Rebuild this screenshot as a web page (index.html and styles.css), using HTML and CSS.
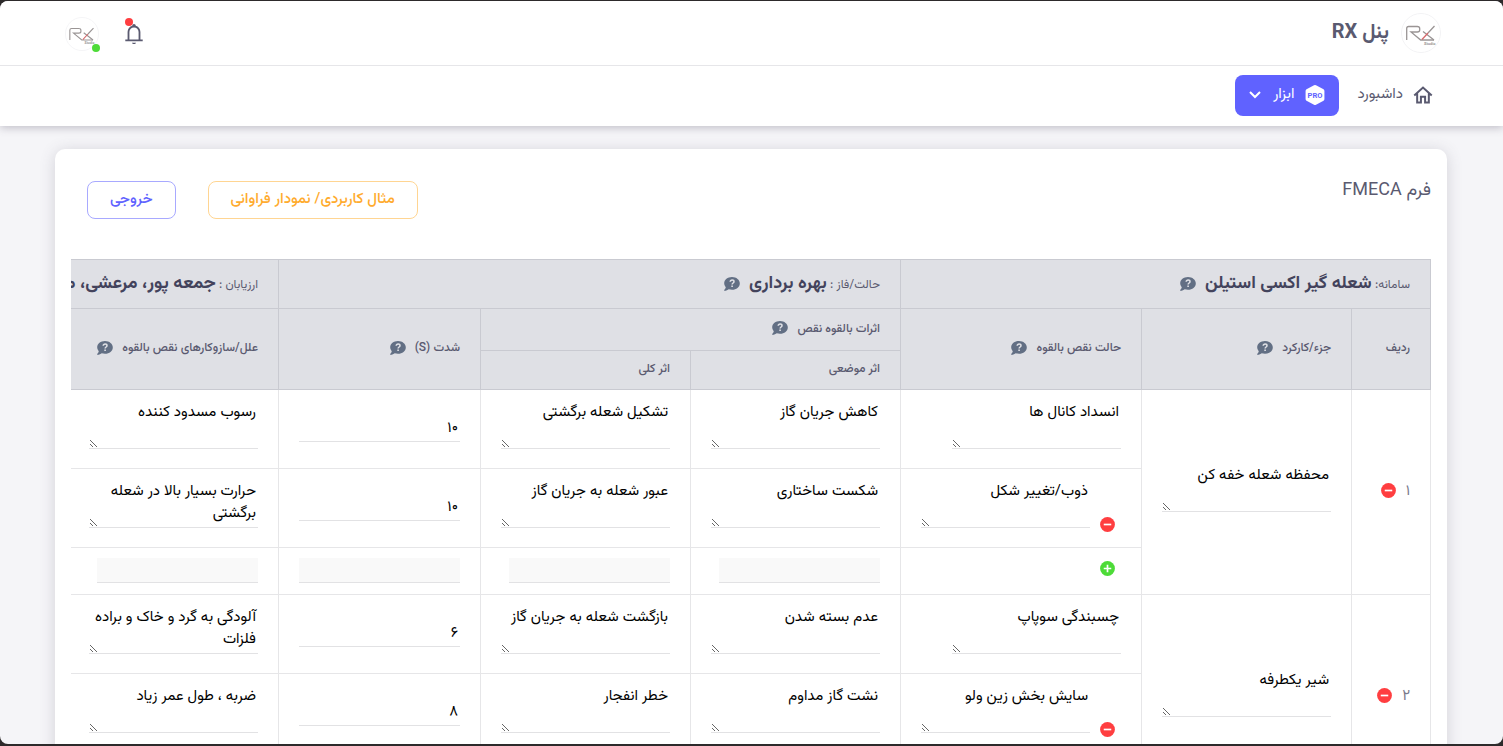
FILE: index.html
```html
<!DOCTYPE html>
<html lang="fa" dir="rtl">
<head>
<meta charset="utf-8">
<meta name="viewport" content="width=device-width, initial-scale=1">
<title>پنل RX</title>
<link rel="stylesheet" href="styles.css">
</head>
<body>
<svg class="sprite" aria-hidden="true">
  <symbol id="help" viewBox="0 0 16 14">
    <path fill="currentColor" d="M8 0C3.600 0 .2 2.800.2 6.300c0 1.500.6 2.800 1.600 3.900C1.500 11.400.800 12.400.1 13.100c-.2.300 0 .7.300.7 1.900 0 3.400-.8 4.300-1.600 1 .3 2.100.5 3.300.5 4.400 0 7.800-2.800 7.800-6.300S12.400 0 8 0z"/>
    <path fill="none" stroke="#dfe0e5" stroke-width="1.500" d="M6.200 4.800c0-1 .8-1.700 1.900-1.700s1.900.6 1.900 1.600c0 1.300-1.900 1.300-1.900 2.800"/>
    <path fill="#dfe0e5" d="M7.300 8.500h1.600v1.600H7.300z"/>
  </symbol>
  <symbol id="minus" viewBox="0 0 16 16">
    <circle cx="8" cy="8" r="7.900" fill="#ff3e40"/><path d="M4 8h8" stroke="#fff" stroke-width="1.800"/>
  </symbol>
  <symbol id="plus" viewBox="0 0 16 16">
    <circle cx="8" cy="8" r="7.900" fill="#4ddb38"/><path d="M4 8h8M8 4v8" stroke="#fff" stroke-width="1.800"/>
  </symbol>
  <symbol id="rx" viewBox="0 0 40 40">
    <circle cx="20" cy="20" r="19.500" fill="#fff" stroke="#f3f3f5"/>
    <path fill="none" stroke="#9a9595" stroke-width="1.300" d="M5.700 27V15.500q0-2 2-2h8.500q2.500 0 2.500 2v1.500q0 2-2.500 2H10l9.700 8H33"/>
    <path fill="none" stroke="#9a9595" stroke-width="1.300" d="M22 18.500l11 8.500M33.500 13L27 20"/>
    <path fill="none" stroke="#d5686b" stroke-width="1.300" d="M27 20l-6 6.500"/>
    <text x="23" y="31.500" font-size="4" font-weight="700" fill="#9a9595" direction="ltr">Studio</text>
  </symbol>
</svg>
<div class="window">
  <header class="header">
    <div class="topbar">
      <div class="container topbar-row">
        <a class="brand" href="#"><svg class="brand-logo" aria-hidden="true"><use href="#rx"/></svg><span>پنل RX</span></a>
        <div class="user-tools">
          <button class="bell" type="button" aria-label="اعلان‌ها">
            <svg viewBox="0 0 24 24" aria-hidden="true"><path fill="currentColor" d="M19 13.600V9.800c0-3.200-2.200-6-5.100-6.700V2.900C13.900 1.800 13.100 1 12 1s-1.900.8-1.900 1.900v.2C7.200 3.800 5 6.600 5 9.800V18H2.500v2h19v-2H19zM7 18V9.800C7 7.100 9.200 4.900 12 4.900s5 2.200 5 4.900V18zM9.700 21.500h4.600c-.3.900-1.200 1.500-2.300 1.500s-2-.6-2.300-1.500z"/></svg>
            <span class="dot dot-red"></span>
          </button>
          <a class="avatar" href="#" aria-label="حساب کاربری"><svg aria-hidden="true"><use href="#rx"/></svg><span class="dot dot-green"></span></a>
        </div>
      </div>
    </div>
    <nav class="menu">
      <div class="container menu-row">
        <a class="menu-link" href="#">
          <svg viewBox="0 0 24 24" aria-hidden="true"><path fill="none" stroke="currentColor" stroke-width="2.400" d="M1.500 12.500L12 3l10.500 9.500M5 10v11h4.500v-7h5v7H19V10"/></svg>
          <span>داشبورد</span>
        </a>
        <button class="menu-link active" type="button">
          <svg viewBox="0 0 24 24" aria-hidden="true"><path fill="#fff" d="M10.800.4q1.200-.6 2.400 0l9 4.800q1.100.7 1.100 2v9.600q0 1.300-1.100 2l-9 4.800q-1.200.6-2.400 0l-9-4.800q-1.100-.7-1.100-2V7.200q0-1.300 1.100-2z"/><text class="pro" x="12" y="15.500" text-anchor="middle" direction="ltr">PRO</text></svg>
          <span>ابزار</span>
          <svg class="chevron" viewBox="0 0 12 8" aria-hidden="true"><path fill="none" stroke="#fff" stroke-width="2" d="M1 1l5 5 5-5"/></svg>
        </button>
      </div>
    </nav>
  </header>
  <main class="container">
    <section class="card">
      <div class="card-head">
        <h1>فرم FMECA</h1>
        <div class="actions">
          <button class="btn btn-warning" type="button">مثال کاربردی/ نمودار فراوانی</button>
          <button class="btn btn-primary" type="button">خروجی</button>
        </div>
      </div>
      <div class="table-wrap">
        <table class="fmeca">
          <colgroup><col class="c-index"><col class="c-text"><col class="c-mode"><col class="c-text"><col class="c-text"><col class="c-score"><col class="c-text"><col class="c-text"></colgroup>
          <thead>
            <tr class="title-row">
              <th colspan="3">سامانه: <strong>شعله گیر اکسی استیلن</strong><svg class="help"><use href="#help"/></svg></th>
              <th colspan="3">حالت/فاز : <strong>بهره برداری</strong><svg class="help"><use href="#help"/></svg></th>
              <th colspan="2">ارزیابان : <strong>جمعه پور، مرعشی، محمدی</strong></th>
            </tr>
            <tr class="group-row">
              <th rowspan="2">ردیف</th>
              <th rowspan="2">جزء/کارکرد<svg class="help"><use href="#help"/></svg></th>
              <th rowspan="2">حالت نقص بالقوه<svg class="help"><use href="#help"/></svg></th>
              <th colspan="2">اثرات بالقوه نقص<svg class="help"><use href="#help"/></svg></th>
              <th rowspan="2">شدت (S)<svg class="help"><use href="#help"/></svg></th>
              <th rowspan="2">علل/سازوکارهای نقص بالقوه<svg class="help"><use href="#help"/></svg></th>
              <th rowspan="2" aria-label="احتمال وقوع"></th>
            </tr>
            <tr class="sub-row"><th>اثر موضعی</th><th>اثر کلی</th></tr>
          </thead>
          <tbody>
            <tr>
              <td rowspan="3" class="mid"><div class="index">۱<button class="icon-btn" type="button" aria-label="حذف"><svg><use href="#minus"/></svg></button></div></td>
              <td rowspan="3"><textarea aria-label="جزء/کارکرد">محفظه شعله خفه کن</textarea></td>
              <td><textarea aria-label="حالت نقص">انسداد کانال ها</textarea></td>
              <td><textarea aria-label="اثر موضعی">کاهش جریان گاز</textarea></td>
              <td><textarea aria-label="اثر کلی">تشکیل شعله برگشتی</textarea></td>
              <td class="mid"><input type="text" aria-label="شدت" value="۱۰"></td>
              <td><textarea aria-label="علل">رسوب مسدود کننده</textarea></td>
              <td class="mid"><input type="text" aria-label="وقوع"></td>
            </tr>
            <tr>
              <td><div class="removable"><button class="icon-btn" type="button" aria-label="حذف"><svg><use href="#minus"/></svg></button><textarea aria-label="حالت نقص">ذوب/تغییر شکل</textarea></div></td>
              <td><textarea aria-label="اثر موضعی">شکست ساختاری</textarea></td>
              <td><textarea aria-label="اثر کلی">عبور شعله به جریان گاز</textarea></td>
              <td class="mid"><input type="text" aria-label="شدت" value="۱۰"></td>
              <td><textarea aria-label="علل">حرارت بسیار بالا در شعله برگشتی</textarea></td>
              <td class="mid"><input type="text" aria-label="وقوع"></td>
            </tr>
            <tr class="add-row">
              <td><button class="icon-btn" type="button" aria-label="افزودن"><svg><use href="#plus"/></svg></button></td>
              <td><input type="text" aria-label="اثر موضعی" disabled></td>
              <td><input type="text" aria-label="اثر کلی" disabled></td>
              <td><input type="text" aria-label="شدت" disabled></td>
              <td><input type="text" aria-label="علل" disabled></td>
              <td><input type="text" aria-label="وقوع" disabled></td>
            </tr>
          </tbody>
          <tbody>
            <tr>
              <td rowspan="3" class="mid"><div class="index">۲<button class="icon-btn" type="button" aria-label="حذف"><svg><use href="#minus"/></svg></button></div></td>
              <td rowspan="3"><textarea aria-label="جزء/کارکرد">شیر یکطرفه</textarea></td>
              <td><textarea aria-label="حالت نقص">چسبندگی سوپاپ</textarea></td>
              <td><textarea aria-label="اثر موضعی">عدم بسته شدن</textarea></td>
              <td><textarea aria-label="اثر کلی">بازگشت شعله به جریان گاز</textarea></td>
              <td class="mid"><input type="text" aria-label="شدت" value="۶"></td>
              <td><textarea aria-label="علل">آلودگی به گرد و خاک و براده فلزات</textarea></td>
              <td class="mid"><input type="text" aria-label="وقوع"></td>
            </tr>
            <tr>
              <td><div class="removable"><button class="icon-btn" type="button" aria-label="حذف"><svg><use href="#minus"/></svg></button><textarea aria-label="حالت نقص">سایش بخش زین ولو</textarea></div></td>
              <td><textarea aria-label="اثر موضعی">نشت گاز مداوم</textarea></td>
              <td><textarea aria-label="اثر کلی">خطر انفجار</textarea></td>
              <td class="mid"><input type="text" aria-label="شدت" value="۸"></td>
              <td><textarea aria-label="علل">ضربه ، طول عمر زیاد</textarea></td>
              <td class="mid"><input type="text" aria-label="وقوع"></td>
            </tr>
            <tr class="add-row">
              <td><button class="icon-btn" type="button" aria-label="افزودن"><svg><use href="#plus"/></svg></button></td>
              <td><input type="text" aria-label="اثر موضعی" disabled></td>
              <td><input type="text" aria-label="اثر کلی" disabled></td>
              <td><input type="text" aria-label="شدت" disabled></td>
              <td><input type="text" aria-label="علل" disabled></td>
              <td><input type="text" aria-label="وقوع" disabled></td>
            </tr>
          </tbody>
        </table>
      </div>
    </section>
  </main>
</div>
</body>
</html>
```
FILE: styles.css
```css
* { box-sizing: border-box; }

body {
  margin: 0;
  height: 100vh;
  padding: 1px 0 2px;
  overflow: hidden;
  background: #2d2a2b;
  color: #5a5a70;
  font: 15px/22px Vazirmatn, Roboto, sans-serif;
}

button, input, textarea { font: inherit; color: inherit; }
button { padding: 0; border: 0; background: none; }
a { color: inherit; text-decoration: none; }
svg { display: block; flex: none; }
.sprite { display: none; }

.window {
  height: 100%;
  overflow: hidden;
  border-radius: 8px;
  background: #f5f5f8;
}

.container {
  width: 100%;
  max-width: 1441px;
  margin: 0 auto;
  padding: 0 25px 0 24px;
}

.header {
  position: relative;
  background: #fff;
  box-shadow: 0 2px 8px rgba(75, 70, 92, .3);
}

.topbar { border-bottom: 1px solid #e6e6e9; }
.topbar-row {
  display: flex;
  align-items: center;
  justify-content: space-between;
  height: 64px;
}
.brand {
  display: flex;
  align-items: center;
  gap: 12px;
  padding-right: 6px;
  font-size: 20px;
  font-weight: 700;
}
.brand-logo { width: 40px; height: 40px; }
.user-tools {
  display: flex;
  align-items: center;
  gap: 24px;
  padding: 2px 0 0 10px;
}
.bell { position: relative; }
.bell svg { width: 22px; height: 22px; }
.avatar { position: relative; }
.avatar svg { width: 34px; height: 34px; }
.dot {
  position: absolute;
  width: 8px;
  height: 8px;
  border-radius: 50%;
}
.dot-red { top: -5px; left: 2px; background: #ff3e40; }
.dot-green { right: -1px; bottom: -1px; background: #4ddb38; }

.menu-row {
  display: flex;
  align-items: center;
  gap: 5px;
  height: 60px;
  padding-bottom: 2px;
}
.menu-link {
  display: flex;
  align-items: center;
  gap: 10px;
  height: 41px;
  padding: 0 14px;
  border-radius: 8px;
}
.menu-link svg { width: 20px; height: 20px; }
.menu-link.active { background: #6062ff; color: #fff; }
.menu-link .chevron { width: 12px; height: 8px; margin-right: 2px; }
.pro { font: 700 9px Roboto, sans-serif; fill: #6062ff; }

.card {
  margin-top: 23px;
  padding: 32px 16px 16px;
  border-radius: 10px;
  background: #fff;
  box-shadow: 0 2px 16px rgba(75, 70, 92, .2);
}
.card-head {
  display: flex;
  align-items: flex-start;
  justify-content: space-between;
  padding-bottom: 40px;
}
h1 {
  margin: 0;
  font-size: 18px;
  font-weight: 400;
  line-height: 20px;
}
.actions { display: flex; gap: 32px; padding-left: 16px; }
.btn {
  height: 38px;
  padding: 0 22px;
  border: 1px solid;
  border-radius: 8px;
  font-weight: 500;
}
.btn-warning { border-color: #ffd592; color: #ffab2e; }
.btn-primary { border-color: #a8a9ff; color: #6062ff; }

.table-wrap { overflow-x: auto; }
.fmeca {
  width: 1573px;
  table-layout: fixed;
  border-collapse: collapse;
}
.c-index { width: 79px; }
.c-text { width: 210px; }
.c-mode { width: 241px; }
.c-score { width: 202px; }

th {
  padding: 0 20px 2px;
  border: 1px solid #c9cad1;
  background: #dfe0e5;
  font-size: 12px;
  font-weight: 500;
  text-align: right;
  white-space: nowrap;
}
.title-row { height: 49px; }
.title-row th { padding-bottom: 0; font-weight: 400; }
.group-row { height: 42px; }
.sub-row { height: 39px; }
th strong { color: #43435c; font-size: 18px; }
.help {
  display: inline-block;
  width: 16px;
  height: 14px;
  margin-right: 9px;
  vertical-align: middle;
  color: #626f84;
}

td {
  padding: 10px 20px 19px;
  border: 1px solid #e6e6e8;
}
.mid { padding: 10px 20px; }
.index { display: flex; align-items: center; gap: 4px; color: #7a7a8c; }
.removable { display: flex; align-items: flex-end; }
.icon-btn { display: block; padding: 0 6px 4px 10px; }
.icon-btn svg { width: 15px; height: 15px; }
.removable .icon-btn { margin-bottom: -8px; }

textarea, input {
  display: block;
  border: 0;
  border-bottom: 1px solid #e2e2e4;
  background: none;
  color: #000;
}
textarea { width: 169px; height: 49px; padding: 2px; }
input { width: 161px; height: 25px; padding: 1px 2px; }
input:disabled { background: #f9f9f9; }
.add-row td { padding: 10px 20px 11px; }
```
